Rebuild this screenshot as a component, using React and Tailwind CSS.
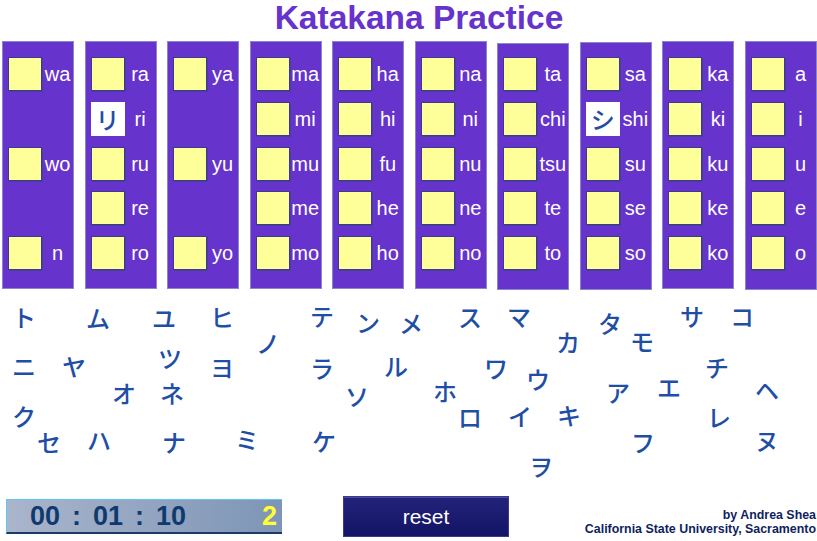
const COLUMNS = [
  ['wa', null, 'wo', null, 'n'],
  ['ra', 'ri', 'ru', 're', 'ro'],
  ['ya', null, 'yu', null, 'yo'],
  ['ma', 'mi', 'mu', 'me', 'mo'],
  ['ha', 'hi', 'fu', 'he', 'ho'],
  ['na', 'ni', 'nu', 'ne', 'no'],
  ['ta', 'chi', 'tsu', 'te', 'to'],
  ['sa', 'shi', 'su', 'se', 'so'],
  ['ka', 'ki', 'ku', 'ke', 'ko'],
  ['a', 'i', 'u', 'e', 'o'],
];

// the frames of two columns sit a little lower, the boxes inside do not
const COLUMN_FRAME = [
  'h-[248px] pt-[15px]',
  'h-[248px] pt-[15px]',
  'h-[248px] pt-[15px]',
  'h-[248px] pt-[15px]',
  'h-[248px] pt-[15px]',
  'h-[248px] pt-[15px]',
  'mt-[2px] h-[247px] pt-[13px]',
  'mt-[1px] h-[248px] pt-[14px]',
  'h-[248px] pt-[15px]',
  'h-[249px] pt-[15px]',
];

const PLACED = { ri: 'リ', shi: 'シ' };

// loose tiles: [glyph, centre x, centre y] in page coordinates
const TILES = [
  ['ト', 24, 316], ['ム', 98, 317], ['ユ', 164, 317], ['ヒ', 222, 316],
  ['ノ', 268, 342], ['ニ', 24, 365], ['ヤ', 74, 365], ['ツ', 170, 357],
  ['ヨ', 222, 366], ['オ', 124, 392], ['ネ', 172, 392], ['ク', 24, 415],
  ['セ', 49, 441], ['ハ', 99, 439], ['ナ', 174, 441], ['ミ', 247, 438],
  ['テ', 322, 315], ['ン', 368, 321], ['メ', 411, 322], ['ス', 470, 316],
  ['マ', 519, 315], ['ラ', 322, 367], ['ル', 396, 365], ['ワ', 496, 367],
  ['ウ', 538, 378], ['ソ', 357, 395], ['ホ', 445, 390], ['ロ', 470, 416],
  ['イ', 520, 415], ['ケ', 324, 440], ['ヲ', 541, 465], ['タ', 610, 322],
  ['カ', 568, 341], ['モ', 642, 340], ['サ', 692, 315], ['コ', 742, 315],
  ['チ', 717, 366], ['ア', 618, 391], ['エ', 669, 386], ['ヘ', 767, 389],
  ['キ', 569, 414], ['レ', 719, 416], ['フ', 643, 441], ['ヌ', 767, 439],
];

const CANVAS_TOP = 289;

const SANS = "font-['Liberation_Sans',Arial,sans-serif]";
const KANA = "font-['Noto_Sans_CJK_JP',sans-serif]";

function Slot({ label }) {
  if (!label) return <div className="h-[34px]" />;
  const kana = PLACED[label];
  return (
    <div className="flex h-[34px] items-center">
      {kana ? (
        <div className={`flex h-[34px] w-[34px] shrink-0 items-center justify-center bg-white text-[24px] font-medium leading-none text-[#1f4ea6] ${KANA}`}>
          {kana}
        </div>
      ) : (
        <div className="h-[34px] w-[34px] shrink-0 border border-[#3c3a8e] bg-[#ffff99] shadow-[1px_1px_0_#4a3f9a]" />
      )}
      <span className="flex-1 text-center text-[20px] leading-none text-white">{label}</span>
    </div>
  );
}

function Column({ rows, frame }) {
  return (
    <div className={`flex flex-col gap-[10.75px] border border-[#8a86cc] bg-[#6633cc] pl-[5px] ${frame}`}>
      {rows.map((label, i) => <Slot key={i} label={label} />)}
    </div>
  );
}

export default function App() {
  return (
    <div className={`w-[817px] h-[541px] overflow-hidden bg-white ${SANS}`}>
      <div className="flex h-[41px] justify-center pl-[21px]">
        <h1 className="text-[33.5px] font-bold leading-[36px] text-[#6633cc]">Katakana Practice</h1>
      </div>

      <div className="grid grid-cols-10 items-start gap-x-[10.5px] pl-[2px]">
        {COLUMNS.map((rows, i) => <Column key={i} rows={rows} frame={COLUMN_FRAME[i]} />)}
      </div>

      <div className="relative h-[206px]">
        {TILES.map(([glyph, x, y]) => (
          <span
            key={glyph}
            className={`absolute -translate-x-1/2 -translate-y-1/2 text-[24px] font-medium leading-none text-[#1f4ea6] ${KANA}`}
            style={{ left: x, top: y - CANVAS_TOP }}
          >
            {glyph}
          </span>
        ))}
      </div>

      <div className="flex h-[46px] items-start">
        <div className="ml-[6px] mt-[3px] flex h-[35px] w-[276px] items-center border-t border-l border-t-[#5cc8f4] border-l-[#5cc8f4] border-b-2 border-b-[#1c3a66] bg-gradient-to-r from-[#aab5cc] to-[#7d95b6] pl-[23px] pr-[5px] text-[27px] font-bold leading-none">
          <div className="flex gap-[12px] text-[#0f3a6e]">
            <span>00</span>
            <span>:</span>
            <span>01</span>
            <span>:</span>
            <span>10</span>
          </div>
          <span className="ml-auto text-[#ffff33]">2</span>
        </div>

        <button className="ml-[61px] h-[41px] w-[166px] border border-[#3a3a90] bg-gradient-to-b from-[#22227a] to-[#141466] text-[21px] leading-none text-white shadow-[inset_0_1px_0_#4a4aa0]">
          reset
        </button>

        <div className="ml-auto mt-[12px] pr-[1px] text-right text-[12.4px] font-bold leading-[14px] text-[#0f1f5e]">
          <div>by Andrea Shea</div>
          <div>California State University, Sacramento</div>
        </div>
      </div>
    </div>
  );
}
